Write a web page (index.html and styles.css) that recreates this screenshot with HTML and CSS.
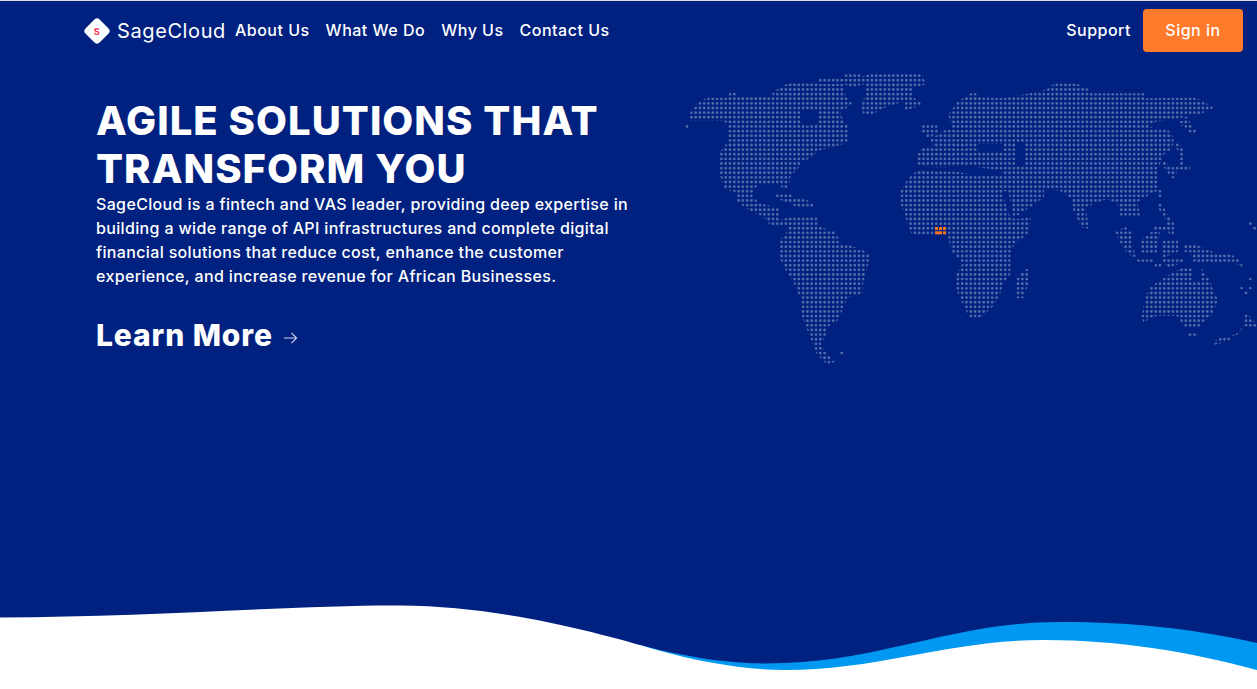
FILE: index.html
```html
<!DOCTYPE html>
<html lang="en">
<head>
    <meta charset="UTF-8">
    <meta name="viewport" content="width=device-width, initial-scale=1.0">
    <title>SageCloud</title>
    <link rel="stylesheet" href="styles.css">
</head>
<body>
    <section class="hero">
        <!-- Dotted world map, drawn at 3x so the coastlines are easy to edit -->
        <svg class="world-map" viewBox="0 0 1731 930" aria-hidden="true">
            <defs>
                <clipPath id="land">
                    <!-- North America, Hudson Bay hole, Greenland, Iceland, Caribbean -->
                    <path clip-rule="evenodd" d="M25 165 L55 128 L80 113 L145 113 L148 98 L168 98 L172 108 L280 108 L275 98 L325 68 L492 68 L497 110 L517 130 L492 150 L480 152 L492 188 L507 195 L507 247 L450 264 L412 272 L400 292 L370 302 L350 332 L332 347 L325 387 L308 387 L300 372 L240 372 L222 387 L217 410 L240 430 L298 445 L300 495 L270 495 L250 470 L210 452 L168 422 L168 397 L133 387 L118 340 L118 280 L143 245 L143 190 L122 182 L90 182 L30 182 Z
                    M362 152 L412 152 L412 192 L382 197 L365 195 Z
                    M14 194 h12 v12 h-12 Z
                    M490 42 L542 42 L542 52 L568 42 L725 42 L738 72 L700 85 L697 112 L722 125 L722 138 L670 152 L670 125 L630 137 L592 152 L578 167 L555 165 L543 152 L547 128 L558 100 L555 72 L515 82 L490 72 L415 72 L415 57 L530 57 L528 52 L490 52 Z
                    M722 196 L772 196 L775 218 L748 234 L735 232 L735 218 L722 218 Z
                    M285 402 L337 402 L337 416 L375 418 L402 430 L402 441 L350 441 L325 428 L285 414 Z"></path>
                    <!-- Eurasia and Africa, Black Sea and Caspian holes -->
                    <path clip-rule="evenodd" d="M658 400 L675 370 L690 350 L712 332 L830 335 L900 348 L965 348 L965 332 L870 318 L790 322 L765 322 L710 318 L710 290 L725 262 L762 262 L750 238 L790 212 L815 205 L805 165 L830 128 L870 100 L892 100 L900 112 L970 115 L1050 100 L1100 88 L1125 70 L1187 70 L1227 88 L1230 100 L1392 100 L1397 115 L1547 113 L1577 128 L1602 143 L1562 162 L1482 177 L1422 187 L1407 200 L1472 213 L1482 245 L1472 277 L1452 282 L1442 307 L1432 332 L1432 392 L1392 414 L1372 427 L1382 472 L1322 472 L1312 432 L1282 417 L1252 427 L1217 442 L1227 507 L1205 502 L1180 452 L1175 417 L1140 392 L1092 387 L1092 412 L1057 437 L1012 467 L1000 470 L985 392 L965 395 L990 470 L1005 477 L1052 473 L1047 522 L1007 547 L992 577 L992 642 L972 667 L957 712 L937 742 L902 772 L868 772 L853 742 L828 687 L828 642 L848 610 L813 572 L803 522 L698 527 L688 507 L673 462 L658 422 Z
                    M895 252 L970 252 L970 275 L895 275 Z
                    M1008 248 L1035 248 L1035 315 L1008 315 Z
                    M1510 165 L1525 165 L1530 190 L1548 210 L1548 222 L1530 222 L1515 200 L1498 195 L1498 183 L1510 183 Z
                    M1484 250 L1497 250 L1512 270 L1512 318 L1530 318 L1530 332 L1490 332 L1488 355 L1475 355 L1450 320 L1445 305 L1458 305 L1470 322 L1490 322 L1497 312 L1497 275 L1484 260 Z
                    M1434 390 L1446 390 L1446 415 L1434 415 Z
                    M1434 430 L1446 430 L1460 460 L1482 490 L1482 526 L1470 526 L1460 510 L1420 512 L1420 500 L1455 500 L1462 485 L1434 445 Z
                    M1008 655 L1035 628 L1045 628 L1045 672 L1030 715 L1008 715 Z"></path>
                    <!-- South America -->
                    <path d="M275 490 L325 472 L412 472 L417 500 L467 515 L482 550 L507 555 L547 570 L572 585 L562 620 L547 680 L547 702 L502 712 L492 742 L472 782 L442 802 L442 822 L422 852 L442 882 L467 905 L440 912 L410 882 L390 832 L378 802 L363 762 L363 720 L338 662 L323 642 L298 592 L298 540 L318 525 L323 497 L280 497 Z
                    M479 872 h12 v12 h-12 Z"></path>
                    <!-- Australia, Indonesia, New Guinea, New Zealand -->
                    <path d="M1385 767 L1397 710 L1410 682 L1450 655 L1505 623 L1537 623 L1537 665 L1563 665 L1563 623 L1587 655 L1597 682 L1614 720 L1597 762 L1577 782 L1557 802 L1515 802 L1490 767 L1430 767 L1390 787 Z
                    M1522 816 h30 v12 h-30 Z
                    M1305 515 L1335 500 L1355 515 L1355 550 L1368 590 L1355 590 L1330 565 L1318 545 Z
                    M1383 540 L1415 515 L1440 515 L1430 580 L1385 580 Z
                    M1445 540 L1495 540 L1495 575 L1445 595 Z
                    M1510 555 L1550 555 L1585 570 L1625 585 L1640 575 L1680 600 L1690 622 L1665 610 L1600 608 L1540 605 L1530 575 L1510 575 Z
                    M1370 598 L1420 598 L1420 606 L1370 606 Z
                    M1425 612 L1445 612 L1445 622 L1425 622 Z
                    M1445 597 L1510 597 L1510 607 L1470 622 L1460 622 Z
                    M1602 855 L1640 845 L1675 822 L1690 800 L1728 800 L1728 790 L1700 760 L1692 770 L1695 790 L1678 812 L1655 828 L1630 830 L1602 843 Z
                    M1704 484 h12 v12 h-12 Z
                    M1719 499 h12 v12 h-12 Z
                    M1704 649 h12 v12 h-12 Z
                    M1680 676 h12 v12 h-12 Z
                    M1704 676 h12 v12 h-12 Z
                    M1692 690 h12 v12 h-12 Z"></path>
                </clipPath>
            </defs>
            <!-- One dashed row per line of dots, the clip cuts out the continents -->
            <g clip-path="url(#land)">
                <path class="map-dots" d="M8.1 5.4H1731M8.1 19.3H1731M8.1 33.1H1731M8.1 47H1731M8.1 60.9H1731M8.1 74.8H1731M8.1 88.6H1731M8.1 102.5H1731M8.1 116.4H1731M8.1 130.2H1731M8.1 144.1H1731M8.1 158H1731M8.1 171.8H1731M8.1 185.7H1731M8.1 199.6H1731M8.1 213.5H1731M8.1 227.3H1731M8.1 241.2H1731M8.1 255.1H1731M8.1 268.9H1731M8.1 282.8H1731M8.1 296.7H1731M8.1 310.5H1731M8.1 324.4H1731M8.1 338.3H1731M8.1 352.2H1731M8.1 366H1731M8.1 379.9H1731M8.1 393.8H1731M8.1 407.6H1731M8.1 421.5H1731M8.1 435.4H1731M8.1 449.2H1731M8.1 463.1H1731M8.1 477H1731M8.1 490.9H1731M8.1 504.7H1731M8.1 518.6H1731M8.1 532.5H1731M8.1 546.3H1731M8.1 560.2H1731M8.1 574.1H1731M8.1 587.9H1731M8.1 601.8H1731M8.1 615.7H1731M8.1 629.6H1731M8.1 643.4H1731M8.1 657.3H1731M8.1 671.2H1731M8.1 685H1731M8.1 698.9H1731M8.1 712.8H1731M8.1 726.6H1731M8.1 740.5H1731M8.1 754.4H1731M8.1 768.3H1731M8.1 782.1H1731M8.1 796H1731M8.1 809.9H1731M8.1 823.7H1731M8.1 837.6H1731M8.1 851.5H1731M8.1 865.3H1731M8.1 879.2H1731M8.1 893.1H1731M8.1 906.9H1731"></path>
            </g>
            <!-- Nigeria -->
            <g fill="#ff7420">
                <rect x="765" y="501" width="9" height="9"></rect>
                <rect x="777" y="501" width="9" height="9"></rect>
                <rect x="789" y="501" width="9" height="9"></rect>
                <rect x="765" y="514" width="9" height="9"></rect>
                <rect x="774" y="514" width="12" height="9"></rect>
                <rect x="789" y="514" width="9" height="9"></rect>
            </g>
        </svg>

        <header class="navbar">
            <a class="brand" href="#">
                <span class="brand-mark"><span class="brand-letter">S</span></span>
                <span class="brand-name">SageCloud</span>
            </a>
            <nav class="nav-links">
                <a href="#">About Us</a>
                <a href="#">What We Do</a>
                <a href="#">Why Us</a>
                <a href="#">Contact Us</a>
            </nav>
            <div class="nav-actions">
                <a class="nav-support" href="#">Support</a>
                <a class="btn-signin" href="#">Sign in</a>
            </div>
        </header>

        <main class="hero-copy">
            <h1>AGILE SOLUTIONS THAT<br>TRANSFORM YOU</h1>
            <p>SageCloud is a fintech and VAS leader, providing deep expertise in<br>building a wide range of API infrastructures and complete digital<br>financial solutions that reduce cost, enhance the customer<br>experience, and increase revenue for African Businesses.</p>
            <a class="learn-more" href="#">
                Learn More
                <svg class="arrow" viewBox="0 0 16 14" aria-hidden="true">
                    <path d="M1 7 H14.5 M9 1.5 L14.5 7 L9 12.5" fill="none" stroke="#cfd6ea" stroke-width="1.2"></path>
                </svg>
            </a>
        </main>

        <svg class="wave" viewBox="0 605 1257 84" preserveAspectRatio="none" aria-hidden="true">
            <path fill="#0098f0" d="M640 645 C690 658 730 663.5 767 663.5 C880 663.5 950 622 1061 622 C1130 622 1190 628 1257 643 V680 H640 Z"></path>
            <path fill="#fff" d="M0 617.5 C150 617 300 605 400 605.5 C500 606 600 633 657 650 C700 662 745 670 785 670 C880 670 950 640 1044 640 C1120 640 1190 652 1257 670 V689 H0 Z"></path>
        </svg>
    </section>
</body>
</html>
```

FILE: styles.css
```css
/* General Styles */
body {
    margin: 0;
    padding: 0;
    font-family: 'Inter', 'Liberation Sans', sans-serif;
    color: #fff;
    background-color: #fff;
}

a {
    color: #fff;
    text-decoration: none;
}

.hero {
    position: relative;
    display: flex;
    flex-direction: column;
    height: 689px;
    box-sizing: border-box;
    overflow: hidden;
    border-top: 1px solid #d9d9d9;
    background-color: #002180;
}

.world-map {
    position: absolute;
    top: 59px;
    left: 680px;
    width: 577px;
    height: 310px;
}

.map-dots {
    fill: none;
    stroke: #5069a9;
    stroke-width: 8.6;
    stroke-linecap: round;
    stroke-dasharray: 0 12.9;
}

/* Navbar */
.navbar {
    position: relative;
    display: flex;
    align-items: center;
    height: 43px;
    margin-top: 8px;
    padding: 0 14px 0 84px;
}

.brand {
    display: flex;
    align-items: center;
    gap: 7px;
    margin-right: 9px;
}

.brand-mark {
    display: flex;
    align-items: center;
    justify-content: center;
    width: 20px;
    height: 20px;
    margin: 0 3px;
    border-radius: 4px;
    background-color: #fff;
    transform: rotate(45deg);
}

.brand-letter {
    font-size: 9px;
    font-weight: 700;
    color: #f0304f;
    transform: rotate(-45deg);
}

.brand-name {
    font-size: 20px;
    font-weight: 400;
    letter-spacing: 0.6px;
}

.nav-links {
    display: flex;
    gap: 16px;
    padding-bottom: 2px;
    font-size: 16px;
    font-weight: 500;
    letter-spacing: 0.5px;
}

.nav-actions {
    display: flex;
    align-items: center;
    gap: 12px;
    margin-left: auto;
    font-size: 16px;
    font-weight: 500;
    letter-spacing: 0.5px;
}

.nav-support {
    padding-bottom: 2px;
}

.btn-signin {
    width: 100px;
    height: 43px;
    line-height: 42px;
    text-align: center;
    border-radius: 4px;
    background-color: #ff7a2b;
}

/* Hero text */
.hero-copy {
    position: relative;
    padding: 45px 0 0 96px;
}

.hero-copy h1 {
    margin: 0 0 -1px;
    font-size: 40px;
    font-weight: 800;
    line-height: 48px;
    letter-spacing: 1.05px;
}

.hero-copy p {
    margin: 0;
    font-size: 16px;
    font-weight: 500;
    line-height: 24px;
    letter-spacing: 0.35px;
}

.learn-more {
    display: inline-flex;
    align-items: center;
    gap: 10px;
    margin-top: 27px;
    font-size: 30px;
    font-weight: 800;
    line-height: 40px;
    letter-spacing: 0.9px;
}

.arrow {
    width: 15px;
    height: 14px;
    margin-top: 5px;
}

.wave {
    display: block;
    width: 1257px;
    height: 84px;
    margin-top: auto;
}
```
